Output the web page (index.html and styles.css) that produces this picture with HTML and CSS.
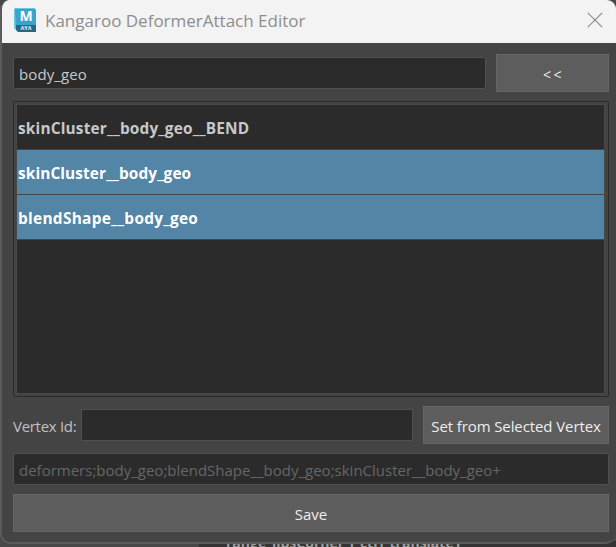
FILE: index.html
```
<!DOCTYPE html>
<html lang="en">
<head>
<meta charset="utf-8">
<title>Kangaroo DeformerAttach Editor</title>
<link rel="stylesheet" href="styles.css">
</head>
<body>
<div class="behind"><span class="behind-text">range_lipsCorner_l_ctrl_translateY</span></div>
<main class="window">
  <header class="titlebar">
    <svg class="logo" viewBox="0 0 24 26" width="24" height="26">
      <path d="M0 2 2 1v22l-2-2z" fill="#62c5da"/>
      <path d="M1 1h19l2 2v16H2z" fill="#37a5cc"/>
      <path d="M1 1h19l1 1H2z" fill="#6bc7df"/>
      <path d="M2 18h20v7H4l-2-2z" fill="#236987"/>
      <text class="logo-m" x="12" y="14.3" text-anchor="middle">M</text>
      <text class="logo-aya" x="12" y="23.4" text-anchor="middle">AYA</text>
    </svg>
    <h1 class="title">Kangaroo DeformerAttach Editor</h1>
    <svg class="close" viewBox="0 0 16 16" width="16" height="16"><path d="M.8.8 15.2 15.2M15.2.8.8 15.2"/></svg>
  </header>
  <section class="content">
    <div class="row row-geo">
      <div class="field"><span class="t-geo">body_geo</span></div>
      <button class="button btn-pick">&lt;&lt;</button>
    </div>
    <div class="list">
      <ul class="items">
        <li class="item"><span class="t-bend">skinCluster__body_geo__BEND</span></li>
        <li class="item selected"><span class="t-skin">skinCluster__body_geo</span></li>
        <li class="item selected"><span class="t-blend">blendShape__body_geo</span></li>
      </ul>
    </div>
    <div class="row row-vertex">
      <label class="label">Vertex Id:</label>
      <div class="field"></div>
      <button class="button btn-vertex">Set from Selected Vertex</button>
    </div>
    <div class="field result">deformers;body_geo;blendShape__body_geo;skinCluster__body_geo+</div>
    <button class="button save">Save</button>
  </section>
</main>
</body>
</html>
```
FILE: styles.css
```
* { box-sizing: border-box; }
body {
  margin: 0;
  width: 616px;
  height: 547px;
  overflow: hidden;
  position: relative;
  background: #484848;
  font: 15px/20px "Open Sans", "Noto Sans", sans-serif;
}
.behind {
  position: absolute;
  left: 199px;
  right: 0;
  bottom: 0;
  height: 6px;
  overflow: hidden;
  background: #353333;
}
.behind-text {
  position: absolute;
  left: 27px;
  bottom: -6px;
  font-weight: 700;
  font-size: 14px;
  line-height: 20px;
  color: #a0a0a0;
  white-space: nowrap;
}
.window {
  position: relative;
  width: 616px;
  height: 544px;
  background: #444;
  border-left: 2px solid #5b5b5b;
  border-bottom: 2px solid #5b5b5b;
  border-radius: 9px 9px 10px 10px;
  overflow: hidden;
}
.titlebar {
  height: 43px;
  display: flex;
  align-items: center;
  padding: 0 13px 3px 12px;
  background: #f3f3f3;
}
.logo { flex: none; }
.logo-m { font: 700 14px "Open Sans", sans-serif; fill: #fff; }
.logo-aya { font: 700 5.5px "Open Sans", sans-serif; fill: #e8f4f8; }
.title {
  flex: 1;
  margin: 1px 0 0 7px;
  font-size: 17px;
  font-weight: 400;
  line-height: 24px;
  color: #8d8d8d;
  white-space: nowrap;
}
.close { fill: none; stroke: #8c8c8c; stroke-width: 1.2; }
.content {
  display: flex;
  flex-direction: column;
  padding: 11px 7px 0 11px;
}
.row { display: flex; align-items: center; height: 38px; }
.field {
  flex: 1;
  height: 32px;
  padding: 2px 5px 0;
  display: flex;
  align-items: center;
  background: #2b2b2b;
  border: 1px solid #505050;
  border-radius: 2px;
  color: #c8c8c8;
  white-space: nowrap;
}
.t-geo { letter-spacing: .1px; }
.button {
  height: 38px;
  padding: 2px 0 0;
  border: 1px solid #666;
  border-radius: 0;
  background: #5d5d5d;
  color: #eee;
  font: inherit;
  white-space: nowrap;
}
.btn-pick { width: 113px; margin-left: 10px; padding: 4px 0 0 2px; letter-spacing: 2.5px; font-size: 14px; }
.list {
  height: 296px;
  margin-top: 9px;
  padding: 2px 3px 2px 2px;
  border: 1px solid #2b2b2b;
  border-radius: 2px;
  background: #444;
}
.items {
  height: 100%;
  margin: 0;
  padding: 0;
  list-style: none;
  background: #2b2b2b;
  border: 1px solid #484848;
}
.item {
  height: 45px;
  padding: 3px 0 0 1px;
  display: flex;
  align-items: center;
  border-bottom: 1px solid #444;
  font-weight: 700;
  font-size: 15.4px;
  color: #c8c8c8;
  white-space: nowrap;
}
.t-bend { letter-spacing: .17px; }
.t-skin { letter-spacing: .1px; }
.t-blend { letter-spacing: .3px; }
.selected { background: #5285a6; color: #fff; }
.row-vertex { margin-top: 9px; }
.label { width: 68px; padding-top: 2px; letter-spacing: -.3px; color: #c0c0c0; white-space: nowrap; }
.btn-vertex { width: 186px; margin-left: 10px; letter-spacing: -.1px; }
.result { flex: none; margin-top: 9px; color: #666; }
.save { margin-top: 9px; }
```
